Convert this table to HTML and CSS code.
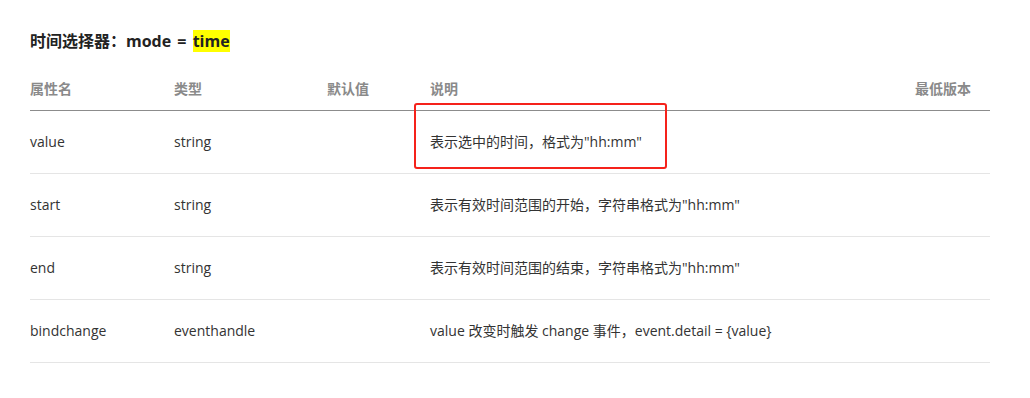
FILE: index.html
```html
<!DOCTYPE html>
<html lang="zh-CN">
<head>
<meta charset="utf-8">
<link rel="stylesheet" href="styles.css">
</head>
<body>
<div class="page">
  <h3 class="title">时间选择器：mode = <span class="hl">time</span></h3>
  <div class="table-wrap">
    <table class="props">
      <thead>
        <tr>
          <th class="c-name">属性名</th>
          <th class="c-type">类型</th>
          <th class="c-def">默认值</th>
          <th class="c-desc">说明</th>
          <th class="c-ver">最低版本</th>
        </tr>
      </thead>
      <tbody>
        <tr><td>value</td><td>string</td><td></td><td>表示选中的时间，格式为"hh:mm"</td><td></td></tr>
        <tr><td>start</td><td>string</td><td></td><td>表示有效时间范围的开始，字符串格式为"hh:mm"</td><td></td></tr>
        <tr><td>end</td><td>string</td><td></td><td>表示有效时间范围的结束，字符串格式为"hh:mm"</td><td></td></tr>
        <tr><td>bindchange</td><td>eventhandle</td><td></td><td>value 改变时触发 change 事件，event.detail = {value}</td><td></td></tr>
      </tbody>
    </table>
    <div class="mark"></div>
  </div>
</div>
</body>
</html>
```
FILE: styles.css
```css
html, body {
  margin: 0;
  padding: 0;
  background: #fff;
}
body {
  font-family: "Open Sans", "Noto Sans CJK SC", sans-serif;
  color: #333;
  font-size: 14px;
}
.page {
  padding: 26px 40px 0 30px;
}
.title {
  margin: 0;
  font-size: 16px;
  font-weight: 700;
  line-height: 30px;
  color: #222;
  word-spacing: 2px;
}
.hl {
  background: #ffff00;
}
.table-wrap {
  position: relative;
  margin-top: 14px;
}
.props {
  width: 100%;
  border-collapse: collapse;
}
.props th {
  text-align: left;
  font-weight: 700;
  color: #8a8a8a;
  height: 38px;
  padding: 0 0 2px 0;
  border-bottom: 1px solid #8c8c8c;
  line-height: 20px;
}
.props th.c-ver {
  text-align: right;
  padding-right: 19px;
}
.c-name { width: 144px; }
.c-type { width: 153px; }
.c-def { width: 103px; }
.props td {
  height: 60px;
  padding: 0 0 2px 0;
  border-bottom: 1px solid #e5e5e5;
  color: #333;
}
.mark {
  position: absolute;
  left: 384px;
  top: 33px;
  width: 249px;
  height: 62px;
  border: 2px solid #f5221b;
  border-radius: 3px;
}
```
